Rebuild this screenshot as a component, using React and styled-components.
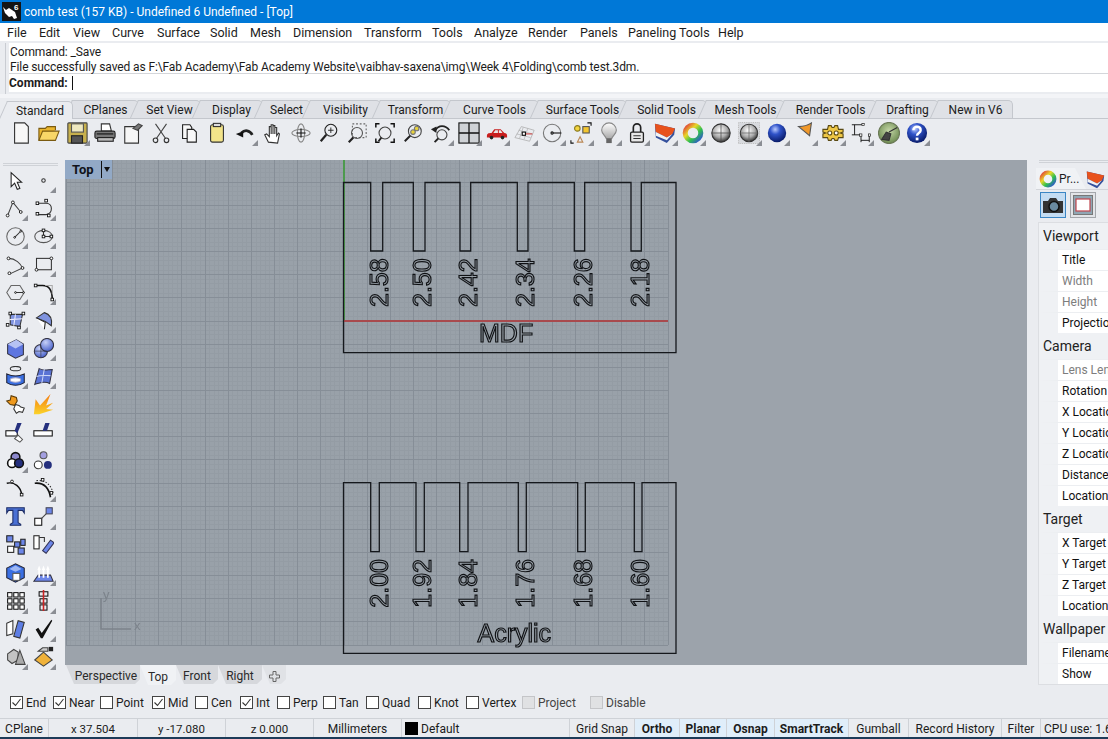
import React from 'react';
import styled, { createGlobalStyle } from 'styled-components';

const GlobalStyle = createGlobalStyle`
  html, body { margin: 0; padding: 0; overflow: hidden; background: #eaecf0; }
  * { box-sizing: border-box; }
`;

const Window = styled.div`
  width: 1108px;
  height: 739px;
  display: flex;
  flex-direction: column;
  overflow: hidden;
  background: #eaecf0;
  color: #1c1c1c;
  font-family: Roboto, "Liberation Sans", sans-serif;
  font-size: 12px;
`;

const TitleBar = styled.div`
  height: 23px;
  flex: none;
  display: flex;
  align-items: center;
  gap: 3px;
  padding-left: 2px;
  background: #0078d7;
  color: #fff;
  white-space: nowrap;
`;

const MenuBar = styled.div`
  height: 18px;
  flex: none;
  display: flex;
  align-items: center;
  padding-left: 7px;
  background: #fff;
  font-size: 12.5px;
  white-space: nowrap;
`;

const MenuItem = styled.span`
  width: ${p => p.$w}px;
  flex: none;
`;

const CommandArea = styled.div`
  height: 51px;
  flex: none;
  margin: 2px 0 0 5px;
  padding-left: 3px;
  border-left: 1px solid #c9ccd2;
  display: flex;
  flex-direction: column;
`;

const History = styled.div`
  height: 31px;
  padding: 2px 0 0 1px;
  background: #fff;
  line-height: 15px;
  letter-spacing: -0.11px;
  border-bottom: 1px solid #d4d6da;
  white-space: nowrap;
`;

const Prompt = styled.div`
  height: 18px;
  display: flex;
  align-items: center;
  background: #fff;
  font-weight: 700;
`;

const Caret = styled.span`
  width: 1px;
  height: 14px;
  margin-left: 4px;
  background: #111;
`;

const TabStrip = styled.div`
  height: 25px;
  flex: none;
  display: flex;
  align-items: flex-end;
  position: relative;
  isolation: isolate;
  padding-left: 8px;
  border-top: 4px solid #f3f4f7;
  border-bottom: 1px solid #c4c7cd;
`;

const Tab = styled.div`
  position: relative;
  height: 18px;
  width: ${p => p.$w}px;
  flex: none;
  margin-bottom: ${p => (p.$active ? '-1px' : '0')};
  display: flex;
  align-items: center;
  justify-content: center;
  background: ${p => (p.$active ? '#eaecf0' : '#dfe1e6')};
  border-top: 1px solid #c4c7cd;
  border-right: 1px solid #c4c7cd;
  border-top-right-radius: 5px;
  z-index: ${p => (p.$active ? 2 : 1)};
  white-space: nowrap;
  &::before {
    content: '';
    position: absolute;
    left: -5px;
    top: -1px;
    bottom: 0;
    width: 12px;
    background: inherit;
    border-top: 1px solid #c4c7cd;
    border-left: 1px solid #c4c7cd;
    transform: skewX(-24deg);
    z-index: -1;
  }
`;

const Toolbar = styled.div`
  height: 28px;
  flex: none;
  display: flex;
  align-items: center;
  padding-left: 7px;
`;

const ToolBtn = styled.div`
  position: relative;
  width: 28px;
  height: 28px;
  flex: none;
  display: flex;
  align-items: center;
  justify-content: center;
  &::after {
    content: '';
    display: ${p => (p.$more ? 'block' : 'none')};
    position: absolute;
    right: 1px;
    bottom: 1px;
    border-style: solid;
    border-width: 0 0 6px 6px;
    border-color: transparent transparent #8b8e94 transparent;
  }
`;

const Main = styled.div`
  margin-top: 13px;
  height: 531px;
  flex: none;
  display: flex;
`;

const SideBar = styled.div`
  width: 65px;
  flex: none;
  padding: 3px 0 0 1px;
  display: flex;
  flex-direction: column;
`;

const Grip = styled.div`
  height: 3px;
  margin: 0 ${p => p.$right || 0}px 0 ${p => p.$left || 0}px;
  flex: none;
  border-top: 1px solid #cfd2d7;
  border-bottom: 1px solid #cfd2d7;
`;

const SideGrid = styled.div`
  display: grid;
  grid-template-columns: repeat(2, 28px);
  grid-auto-rows: 28.06px;
`;

const ViewColumn = styled.div`
  width: 962px;
  flex: none;
  display: flex;
  flex-direction: column;
`;

const Viewport = styled.div`
  position: relative;
  height: 505px;
  flex: none;
  background: #9ca3ab;
  overflow: hidden;
`;

const ViewportLabel = styled.div`
  position: absolute;
  left: 0;
  top: 0;
  width: 47px;
  height: 19px;
  display: flex;
  align-items: center;
  padding-left: 7px;
  background: #92a9c6;
  font-weight: 700;
  font-size: 13px;
  color: #10131a;
`;

const LabelArrow = styled.span`
  margin-left: auto;
  height: 17px;
  width: 11px;
  border-left: 1px solid #111;
  position: relative;
  &::after {
    content: '';
    position: absolute;
    left: 2px;
    top: 6px;
    border-style: solid;
    border-width: 5px 3.5px 0 3.5px;
    border-color: #111 transparent transparent transparent;
  }
`;

const ViewTabs = styled.div`
  height: 20px;
  flex: none;
  display: flex;
  padding-left: 1px;
`;

const ViewTab = styled.div`
  width: ${p => p.$w}px;
  height: ${p => (p.$active ? 20 : 19)}px;
  flex: none;
  display: flex;
  align-items: center;
  justify-content: center;
  padding: 3px 0 0 ${p => p.$pad || 0}px;
  background: ${p => (p.$active ? '#f0f2f5' : '#d6d8dc')};
  clip-path: polygon(0 0, 100% 0, 100% 75%, calc(100% - 5px) 100%, 8px 100%);
  color: #2a2a2a;
`;

const PlusTab = styled(ViewTab)`
  background: #e0e2e6;
`;

const Panel = styled.div`
  width: 72px;
  margin-left: 9px;
  flex: none;
  display: flex;
  flex-direction: column;
  overflow: hidden;
`;

const PanelTabs = styled.div`
  height: 22px;
  margin-top: 5px;
  flex: none;
  display: flex;
  align-items: flex-end;
  border-bottom: 1px solid #d3d5da;
`;

const PanelTab = styled.div`
  width: 50px;
  height: 21px;
  flex: none;
  display: flex;
  align-items: center;
  gap: 2px;
  padding-left: 3px;
  background: #f0f2f5;
  clip-path: polygon(0 0, 78% 0, 100% 100%, 0 100%);
  white-space: nowrap;
`;

const PanelButtons = styled.div`
  height: 28px;
  margin-top: 1px;
  margin-left: 4px;
  flex: none;
  display: flex;
  align-items: center;
  gap: 4px;
`;

const ViewBtn = styled.div`
  width: 26px;
  height: 26px;
  flex: none;
  display: flex;
  align-items: center;
  justify-content: center;
  background: ${p => (p.$selected ? '#c4dcf2' : '#e2e4e8')};
  border: 1px solid ${p => (p.$selected ? '#3c86c4' : '#a4a7ac')};
`;

const PropTable = styled.div`
  margin: 3px 0 0 2px;
  width: 72px;
  background: #fff;
  border: 1px solid #dcdee2;
  border-right: 0;
  white-space: nowrap;
`;

const SectionHead = styled.div`
  height: 26px;
  padding-left: 4px;
  display: flex;
  align-items: center;
  background: #eff1f4;
  font-size: 14px;
  color: #222;
`;

const PropRow = styled.div`
  height: 21px;
  display: flex;
  align-items: center;
  border-top: 1px solid #eceef1;
  border-left: 19px solid #eff1f4;
  padding-left: 4px;
  color: ${p => (p.$muted ? '#7d7d7d' : '#111')};
`;

const OsnapBar = styled.div`
  height: 27px;
  flex: none;
  display: flex;
  align-items: center;
  padding: 0 0 4px 10px;
  white-space: nowrap;
`;

const Snap = styled.label`
  width: ${p => p.$w}px;
  flex: none;
  display: flex;
  align-items: center;
  gap: 3px;
  color: ${p => (p.$off ? '#444' : '#1c1c1c')};
`;

const Box = styled.span`
  width: 13px;
  height: 13px;
  flex: none;
  display: flex;
  background: ${p => (p.$off ? '#e0e1e3' : '#fff')};
  border: 1px solid ${p => (p.$off ? '#c4c5c8' : '#444')};
`;

const StatusBar = styled.div`
  height: 21px;
  flex: none;
  display: flex;
  border-top: 1px solid #cfd2d7;
  border-bottom: 2px solid #1d3b58;
  white-space: nowrap;
`;

const Cell = styled.div`
  width: ${p => p.$w}px;
  flex: none;
  display: flex;
  align-items: center;
  justify-content: ${p => (p.$left ? 'flex-start' : 'center')};
  padding-left: ${p => (p.$left ? 3 : 0)}px;
  padding-top: 1px;
  gap: 3px;
  border-right: 1px solid #cfd2d7;
  background: ${p => (p.$on ? '#e0eefa' : 'transparent')};
  font-weight: ${p => (p.$on ? 700 : 400)};
  font-size: ${p => (p.$num ? 11.5 : 12)}px;
  overflow: hidden;
`;

const Swatch = styled.span`
  width: 13px;
  height: 13px;
  background: #000;
  flex: none;
`;

const Canvas = styled.svg`
  display: block;
  position: absolute;
  inset: 0;
  will-change: transform;
`;

const Defs = styled.svg`
  position: absolute;
  width: 0;
  height: 0;
`;

const S = ({ size = 24, children }) => (
  <svg width={size} height={size} viewBox="0 0 24 24" fill="none" stroke="#222" strokeWidth="1.2">{children}</svg>
);

const h = (x, y, s = 3) => <rect x={x - s / 2} y={y - s / 2} width={s} height={s} fill="#fff" stroke="#111" strokeWidth="1" />;
const c = (x, y, r = 1.6) => <circle cx={x} cy={y} r={r} fill="#fff" stroke="#111" strokeWidth="1" />;

const ICONS = {
  new: <path d="M5 1h11l4 4v18H5z" fill="#f7f7f7" stroke="#333" />,
  open: <><path d="M1 20V7h7l2-2h9v4" fill="#e9b52e" stroke="#7a5a10" /><path d="M1 20l4-10h18l-4 10z" fill="#f8d667" stroke="#7a5a10" /></>,
  save: <><rect x="2" y="1" width="21" height="22" rx="1" fill="#c7b04d" stroke="#444" /><rect x="6" y="2" width="13" height="9" fill="#efe9c0" stroke="#555" /><rect x="6" y="15" width="12" height="8" fill="#555" /></>,
  print: <><path d="M8 2h9l2 8H8z" fill="#fff" stroke="#333" /><rect x="1" y="10" width="22" height="8" rx="2" fill="#777" stroke="#222" /><rect x="4" y="17" width="17" height="4" fill="#bbb" stroke="#222" /><path d="M3 13h18" stroke="#111" /></>,
  props: <><path d="M3 5h15v18H3z" fill="#f6f6f6" stroke="#333" /><path d="M12 7l6-5 4 2-5 5z" fill="#777" stroke="#444" /></>,
  cut: <><path d="M6 2l11 16M18 2L7 18" stroke="#444" /><circle cx="6" cy="20" r="2.5" stroke="#333" /><circle cx="18" cy="20" r="2.5" stroke="#333" /></>,
  copy: <><path d="M5 3h8l2 3v12H5z" fill="#f8f8f8" stroke="#222" /><path d="M10 8h7l3 3v11H10z" fill="#f8f8f8" stroke="#222" /></>,
  paste: <><rect x="5" y="3" width="14" height="19" rx="2" fill="#f3e48a" stroke="#333" /><rect x="8" y="1.5" width="8" height="3.5" fill="#ddd" stroke="#333" /></>,
  undo: <><path d="M8 12c4-4 9-3 12 2" stroke="#222" strokeWidth="3" /><path d="M2 13l8-3v7z" fill="#111" stroke="none" /></>,
  hand: <path d="M7 22l-4-8 2-1 3 3V5h2v8-10h2v10-9h2v9-7h2v9l2-3 1 1-2 10z" fill="#fff" stroke="#333" />,
  rotate: <><ellipse cx="12" cy="12" rx="10" ry="4" stroke="#888" /><ellipse cx="12" cy="12" rx="4" ry="10" stroke="#888" /><path d="M12 7v10M7 12h10" stroke="#111" /></>,
  zoom: <><circle cx="14" cy="9" r="6.5" stroke="#222" /><path d="M9 14l-6 7" strokeWidth="2.4" /><path d="M14 6v6M11 9h6" strokeWidth="1" /></>,
  zoomWin: <><rect x="7" y="2" width="15" height="15" strokeDasharray="2 2" stroke="#666" /><circle cx="12" cy="12" r="6" stroke="#555" /><path d="M8 17l-5 5" strokeWidth="2.4" /></>,
  zoomExt: <><circle cx="12" cy="12" r="6.5" stroke="#444" /><path d="M8 17l-3 4" strokeWidth="2" /><path d="M2 6V2h4M18 2h4v4M2 18v4h4M18 22h4v-4" stroke="#111" strokeWidth="1.6" /></>,
  zoomSel: <><circle cx="14" cy="10" r="7" stroke="#444" /><circle cx="12" cy="11" r="2.5" fill="#e8d23a" stroke="#777" /><circle cx="16" cy="7" r="2.5" fill="#e8d23a" stroke="#777" /><path d="M9 15l-6 6" strokeWidth="2.2" /></>,
  zoomPrev: <><path d="M6 9c3-6 11-6 15 0" stroke="#222" strokeWidth="2" /><path d="M1 8l6-3v7z" fill="#222" stroke="none" /><circle cx="13" cy="14" r="5.5" stroke="#444" /><path d="M9 18l-4 4" strokeWidth="2" /></>,
  four: <><rect x="1" y="1" width="22" height="22" fill="#cfd2d6" stroke="#111" /><path d="M12 1v22M1 12h22" stroke="#111" strokeWidth="1.4" /></>,
  car: <><path d="M1 15c0-3 3-3 5-3l3-4h7l4 4c2 0 3 1 3 3v2H1z" fill="#c81e1e" stroke="none" /><path d="M10 9h3v3H8zM14 9h2l2 3h-4z" fill="#e8e8e8" stroke="none" /><circle cx="6" cy="17" r="2" fill="#222" stroke="none" /><circle cx="18" cy="17" r="2" fill="#222" stroke="none" /></>,
  cplane: <><path d="M8 5l14 4-5 12L1 17z" stroke="#aaa" strokeWidth="0.8" /><path d="M5 9l15 4M3 13l15 4M10 6l-4 12M15 7l-4 12" stroke="#aaa" strokeWidth="0.7" /><path d="M12 13h8" stroke="#c44" /><rect x="9" y="11" width="3.5" height="3.5" fill="#fff" stroke="#111" /></>,
  cpoint: <><circle cx="11" cy="12" r="9.5" stroke="#777" /><circle cx="11" cy="12" r="1.2" stroke="#111" /><path d="M12 12h9" stroke="#111" /></>,
  snap: <><circle cx="8" cy="7" r="3" fill="#f3d53f" stroke="#8a7a20" /><rect x="14" y="5" width="7" height="7" fill="#f3c52f" stroke="#555" /><path d="M11 16l3 6H8z" stroke="#b85" /><path d="M19 1h4v3M1 20v3h3" stroke="#111" /></>,
  bulb: <><path d="M12 1a8 8 0 00-8 8c0 4 4 6 5 9h6c1-3 5-5 5-9a8 8 0 00-8-8z" fill="url(#bulbG)" stroke="#888" /><rect x="9" y="18" width="6" height="5" fill="#666" stroke="none" /></>,
  lock: <><path d="M8 11V6a4 4 0 018 0v5" stroke="#222" strokeWidth="1.8" /><rect x="5" y="11" width="14" height="11" rx="1.5" fill="#e7e7e7" stroke="#222" strokeWidth="1.4" /><path d="M8 15h8M8 18h8" stroke="#333" /></>,
  layers: <><path d="M1 2l22 5-1 7-8 9-12-6z" fill="#34509c" stroke="none" /><path d="M1 2l22 5-3 6-6 4-12-6z" fill="#e8521c" stroke="none" /><path d="M2 11l12 6 6-4-6 7-12-5z" fill="#f2f2f2" stroke="none" /></>,
  wheel: <circle cx="12" cy="12" r="8.5" stroke="url(#rainbow)" strokeWidth="5.5" />,
  ball: <><circle cx="12" cy="12" r="10" fill="url(#greyBall)" stroke="#333" /><path d="M2 12h20M12 2v20" stroke="#444" strokeWidth="0.8" /></>,
  ball2: <><rect x="0.5" y="0.5" width="23" height="23" fill="#d8dade" stroke="#bbb" strokeDasharray="1 1" /><circle cx="12" cy="12" r="9.5" fill="url(#greyBall)" stroke="#333" /><path d="M2.5 12h19M12 2.5v19" stroke="#666" strokeWidth="0.8" /></>,
  blueBall: <circle cx="12" cy="12" r="10" fill="url(#blueBall)" stroke="none" />,
  cone: <path d="M5 5c5 0 11-2 14-4l-2 14z" fill="#f0982a" stroke="#555" />,
  gear: <><path d="M1 8h5l1-4h3l1 2h2l1-2h3l1 4h5v3l-3 1 3 1v4h-5l-1 3h-3l-1-2h-2l-1 2H7l-1-3H1v-4l3-1-3-1z" fill="#eec746" stroke="#5a4a14" /><circle cx="8.5" cy="12" r="2.2" fill="#fff" stroke="#5a4a14" /><circle cx="15.5" cy="12" r="2.2" fill="#fff" stroke="#5a4a14" /></>,
  dims: <><path d="M2 3h12M5 3v11M2 14h9M12 14v8M12 20h9M21 14v8" stroke="#111" strokeWidth="1" /><rect x="13" y="1.5" width="2.5" height="2.5" fill="#fff" stroke="#111" strokeWidth="0.7" /><rect x="10.5" y="13" width="2.5" height="2.5" fill="#fff" stroke="#111" strokeWidth="0.7" /><rect x="20" y="13" width="2.5" height="2.5" fill="#fff" stroke="#111" strokeWidth="0.7" /></>,
  globe: <><circle cx="12" cy="12" r="11.5" fill="url(#greenBall)" stroke="#6c7a58" /><path d="M4 19l5-8 5 2-2 7zM12 11l9-5" stroke="#333" fill="#444" /></>,
  help: <><circle cx="12" cy="12" r="11" fill="url(#blueBall)" stroke="none" /><path d="M8 9c0-5 8-5 8 0 0 3-4 3-4 6" stroke="#fff" strokeWidth="2.6" /><rect x="10.6" y="17" width="3" height="3" fill="#fff" stroke="none" /></>,
  pointer: <path d="M7 3v16l4-4 3 7 3-1-3-7h5z" fill="#fff" stroke="#222" />,
  point: <circle cx="12" cy="12" r="2" stroke="#333" />,
  polyline: <><path d="M3 20L9 5l9 11" stroke="#444" />{c(3, 20)}{c(9, 5)}{c(18, 16)}</>,
  curve: <><path d="M5 6h10c8 0 8 12 0 13H5" stroke="#333" />{h(5, 6)}{h(15, 3)}{h(5, 18)}{h(18, 20)}</>,
  circle: <><circle cx="12" cy="12" r="10" stroke="#666" /><path d="M11 13l7-7" stroke="#333" />{c(11, 13, 1)}{c(18, 6, 1)}</>,
  ellipse: <><ellipse cx="12" cy="12" rx="10" ry="7" stroke="#555" /><path d="M12 12h9M12 5v7" stroke="#333" />{h(12, 12)}{h(12, 5)}{h(21, 12)}</>,
  arc: <><path d="M4 5c8 0 14 6 16 11l-15 7" stroke="#444" />{c(4, 5)}{c(20, 16)}{c(5, 22)}</>,
  rect: <><rect x="4" y="5" width="17" height="13" stroke="#333" />{c(21, 5)}{c(4, 18)}</>,
  polygon: <><path d="M7 4h10l5 8-5 8H7l-5-8z" stroke="#666" /><path d="M12 12h9" stroke="#333" />{c(12, 12, 1)}{c(21, 12, 1)}</>,
  fillet: <><path d="M3 4h8c7 0 11 4 11 16" stroke="#111" strokeWidth="1.8" /><path d="M14 4h8v10" stroke="#aaa" />{h(3, 4)}{h(22, 20)}</>,
  surfPts: <><path d="M6 5h14l-3 14-11-2z" fill="#7f93df" stroke="#333" /><path d="M12 5l-2 13M5 11l15-1" stroke="#eef" />{h(6, 4)}{h(21, 4)}{h(3, 17)}{h(16, 20)}</>,
  edgeSurf: <><path d="M4 9L13 3c7 2 9 8 8 15l-7-5z" fill="#7f93df" stroke="#333" /><path d="M4 9l10 5 -1 8" fill="#fff" stroke="#222" /></>,
  box: <><path d="M3 7l10-5 8 5v12l-9 4-9-5z" fill="#5e76e0" stroke="#334" /><path d="M3 7l9 5 9-5-8-5z" fill="#b6c2f4" stroke="none" /></>,
  spheres: <><circle cx="9" cy="15" r="7.5" fill="url(#purpleBall)" stroke="#334" /><circle cx="16" cy="8" r="7.5" fill="url(#purpleBall)" stroke="#334" /><path d="M2 15h14M9 8v14" stroke="#334" strokeWidth="0.7" /></>,
  cylinder: <><ellipse cx="12" cy="3" rx="6" ry="2.5" stroke="#333" /><path d="M2 9c6 3 14 3 20 0v10c-6 4-14 4-20 0z" fill="#3a6fe2" stroke="#223" /><ellipse cx="12" cy="16" rx="6" ry="2.5" fill="#fff" stroke="#aac" /></>,
  surfBlue: <><path d="M7 3c5 3 10 1 15 1l-3 16c-5-3-10-1-17 1z" fill="#5a73d5" stroke="#334" /><path d="M4 12c5-2 11-1 16-1M13 3l-3 17" stroke="#cbd5f6" /></>,
  puzzle: <><path d="M2 8l4-1 1-5 6 2 1 4-3 5-5-1z" fill="#f09a1e" stroke="#5a3a05" /><path d="M12 12l4 1 2 2 4 1-2 5-4-1-3 2-3-5z" fill="#fff" stroke="#333" /></>,
  burst: <path d="M1 23L3 6l5 7L20 0l-5 13 8-3-8 7 8 1-16 5z" fill="url(#burstG)" stroke="none" />,
  trim: <><rect x="1" y="10" width="13" height="6" fill="#fff" stroke="#111" /><path d="M11 10l3-9h5l-5 12z" fill="#25307e" stroke="none" /><path d="M11 19l4-4 5 5-3 3z" fill="#fff" stroke="#555" /></>,
  split: <><rect x="1" y="10" width="21" height="6" fill="#fff" stroke="#111" /><path d="M11 10l3-9h5l-3 9z" fill="#25307e" stroke="none" /></>,
  boolean: <><circle cx="12" cy="8" r="5" fill="#8c88cc" stroke="#111" strokeWidth="1.8" /><circle cx="8" cy="15" r="5" fill="#fff" stroke="#111" strokeWidth="1.8" /><circle cx="16" cy="15" r="5" fill="#25307e" stroke="#111" strokeWidth="1.8" /></>,
  circles: <><circle cx="12" cy="6" r="4" fill="#a39fe0" stroke="#555" /><circle cx="6" cy="17" r="4.5" fill="#fff" stroke="#333" /><circle cx="17" cy="17" r="4.5" fill="#25307e" stroke="none" /></>,
  arcPt: <><path d="M2 6c9-2 16 4 17 13" stroke="#111" strokeWidth="1.6" />{c(8, 4)}{h(19, 19)}</>,
  offset: <><path d="M2 6c10-1 16 5 18 16" stroke="#111" strokeWidth="1.8" /><path d="M4 3c10-1 16 4 19 14" stroke="#222" strokeDasharray="1.5 2" />{h(11, 2)}{h(21, 17)}</>,
  text: <path d="M2 2h20v6l-2-3h-5v14l3 2v1H6v-1l3-2V5H4L2 8z" fill="#4a70d4" stroke="#1c2c66" />,
  scale: <><rect x="2" y="14" width="8" height="8" stroke="#111" fill="#fff" /><rect x="15" y="2" width="7" height="7" fill="#6c86e8" stroke="#445" /><path d="M9 15l6-6" stroke="#444" /></>,
  array: <><rect x="2" y="2" width="7" height="7" fill="#6c86e8" stroke="#222" /><rect x="11" y="9" width="6" height="6" fill="#6c86e8" stroke="#222" /><rect x="18" y="6" width="5" height="7" fill="#6c86e8" stroke="#222" /><rect x="3" y="14" width="7" height="7" fill="#fff" stroke="#222" /><rect x="15" y="16" width="7" height="7" fill="#6c86e8" stroke="#222" /></>,
  orient: <><rect x="1" y="2" width="6" height="15" fill="#fff" stroke="#222" /><path d="M15 22l-4-3 9-12 4 3z" fill="#6c86e8" stroke="#335" /><path d="M7 4h6v5" stroke="#333" /></>,
  solid: <><path d="M2 7l10-5 10 5v11l-10 5-10-5z" fill="#3a6fe2" stroke="#223" /><path d="M5 8l7-4 7 4-7 3z" fill="#9db7f4" stroke="none" /><rect x="9" y="13" width="8" height="8" fill="#fff" stroke="#555" /></>,
  extrude: <><path d="M1 22l5-7h14l3 7z" fill="#6c86e8" stroke="#334" /><path d="M7 18V8M12 18V8M17 18V8" stroke="#fff" strokeWidth="2" /><path d="M5 9l2-5 2 5zM10 9l2-5 2 5zM15 9l2-5 2 5z" fill="#fff" stroke="none" /></>,
  grid: <>{[3, 10, 17].flatMap(y => [3, 10, 17].map(x => <rect key={`${x}${y}`} x={x} y={y} width="5" height="5" stroke="#111" fill="#fff" />))}</>,
  mirror: <><rect x="7" y="2" width="10" height="5" stroke="#111" /><rect x="8" y="10" width="8" height="5" stroke="#111" /><rect x="8" y="17" width="8" height="6" stroke="#111" /><path d="M12 0v24" stroke="#c22" strokeWidth="1.8" /></>,
  panels: <><path d="M2 6l7-3v15l-7 2z" fill="#fff" stroke="#333" /><path d="M10 21l5-18 7 2-5 18z" fill="#5e7ee4" stroke="#333" /></>,
  check: <path d="M3 13l3-2 4 6L21 2l1 1-11 20h-2z" fill="#111" stroke="none" />,
  shapes: <><path d="M3 9l7-5 5 3v9l-7 4-5-4z" fill="#c3c3c3" stroke="#444" /><path d="M17 5l6 16H12z" fill="#aaa" stroke="#444" /></>,
  pyramid: <><path d="M2 16L12 7l10 9-10 7z" fill="#f0b23a" stroke="#444" /><path d="M6 6l5-4h6v4h-6z" fill="#ccc" stroke="#444" /><rect x="18" y="1" width="5" height="5" fill="#222" stroke="none" /></>,
};

const Icon = ({ name, size }) => <S size={size}>{ICONS[name]}</S>;

const MENU = [['File', 32], ['Edit', 34], ['View', 39], ['Curve', 45], ['Surface', 53], ['Solid', 40], ['Mesh', 43], ['Dimension', 71], ['Transform', 68], ['Tools', 42], ['Analyze', 54], ['Render', 52], ['Panels', 48], ['Paneling Tools', 90], ['Help', 40]];

const TABS = [['Standard', 65], ['CPlanes', 66], ['Set View', 62], ['Display', 62], ['Select', 48], ['Visibility', 70], ['Transform', 70], ['Curve Tools', 88], ['Surface Tools', 88], ['Solid Tools', 80], ['Mesh Tools', 78], ['Render Tools', 92], ['Drafting', 62], ['New in V6', 74]];

const TOOLS = [['new'], ['open'], ['save', 1], ['print'], ['props'], ['cut'], ['copy'], ['paste'], ['undo', 1], ['hand'], ['rotate'], ['zoom'], ['zoomWin'], ['zoomExt'], ['zoomSel'], ['zoomPrev', 1], ['four', 1], ['car', 1], ['cplane', 1], ['cpoint', 1], ['snap', 1], ['bulb', 1], ['lock', 1], ['layers', 1], ['wheel', 1], ['ball'], ['ball2', 1], ['blueBall', 1], ['cone', 1], ['gear', 1], ['dims', 1], ['globe'], ['help', 1]];

const SIDE = [['pointer'], ['point', 1], ['polyline', 1], ['curve', 1], ['circle', 1], ['ellipse', 1], ['arc', 1], ['rect', 1], ['polygon', 1], ['fillet', 1], ['surfPts', 1], ['edgeSurf', 1], ['box', 1], ['spheres', 1], ['cylinder', 1], ['surfBlue', 1], ['puzzle'], ['burst'], ['trim'], ['split'], ['boolean', 1], ['circles', 0], ['arcPt'], ['offset', 1], ['text'], ['scale', 1], ['array'], ['orient'], ['solid', 1], ['extrude', 1], ['grid', 1], ['mirror', 1], ['panels', 1], ['check', 1], ['shapes', 1], ['pyramid', 1]];

const SNAPS = [['End', 43, 1], ['Near', 47, 1], ['Point', 52, 0], ['Mid', 43, 1], ['Cen', 45, 0], ['Int', 37, 1], ['Perp', 46, 0], ['Tan', 43, 0], ['Quad', 52, 0], ['Knot', 48, 0], ['Vertex', 56, 0], ['Project', 68, 0, 1], ['Disable', 80, 0, 1]];

const PROPS = [
  ['Viewport', [['Title'], ['Width', 1], ['Height', 1], ['Projection']]],
  ['Camera', [['Lens Length', 1], ['Rotation'], ['X Location'], ['Y Location'], ['Z Location'], ['Distance'], ['Location']]],
  ['Target', [['X Target'], ['Y Target'], ['Z Target'], ['Location']]],
  ['Wallpaper', [['Filename'], ['Show']]],
];

const STATUS = [
  { t: 'CPlane', w: 49 }, { t: 'x 37.504', w: 89, num: true }, { t: 'y -17.080', w: 88, num: true }, { t: 'z 0.000', w: 88, num: true }, { t: 'Millimeters', w: 88 },
  { t: 'Default', w: 168, swatch: true }, { t: 'Grid Snap', w: 65 }, { t: 'Ortho', w: 45, on: true }, { t: 'Planar', w: 47, on: true }, { t: 'Osnap', w: 48, on: true },
  { t: 'SmartTrack', w: 74, on: true }, { t: 'Gumball', w: 60 }, { t: 'Record History', w: 93 }, { t: 'Filter', w: 39 }, { t: 'CPU use: 1.6 %', w: 90, left: true },
];

// drawing coords are viewport-relative: viewport starts at (65,160)
const OX = 344 - 65;
const OY = 321 - 160;
const STEP = 23.15;

const range = (a, b) => Array.from({ length: b - a + 1 }, (_, i) => a + i);

const Grid = () => {
  const left = OX - 12 * STEP;
  const right = OX + 14 * STEP;
  const top = OY - 7 * STEP;
  const bottom = OY + 14 * STEP;
  return (
    <g shapeRendering="crispEdges">
      <rect x={left} y={top} width={right - left} height={bottom - top} fill="#99a1a9" />
      {range(-60, 70).map(i => (i % 5 ? <line key={`mv${i}`} x1={OX + (i * STEP) / 5} x2={OX + (i * STEP) / 5} y1={top} y2={bottom} stroke="#949ca4" /> : null))}
      {range(-35, 70).map(i => (i % 5 ? <line key={`mh${i}`} y1={OY + (i * STEP) / 5} y2={OY + (i * STEP) / 5} x1={left} x2={right} stroke="#949ca4" /> : null))}
      {range(-12, 14).map(i => <line key={`v${i}`} x1={OX + i * STEP} x2={OX + i * STEP} y1={top} y2={bottom} stroke="#868e97" />)}
      {range(-7, 14).map(i => <line key={`h${i}`} y1={OY + i * STEP} y2={OY + i * STEP} x1={left} x2={right} stroke="#868e97" />)}
      <line x1={OX} x2={OX} y1={0} y2={OY} stroke="#4d9a4d" strokeWidth="1.4" />
      <line x1={OX} x2={right} y1={OY} y2={OY} stroke="#a84a4e" strokeWidth="1.6" />
    </g>
  );
};

const combPath = (top, bottom, slotBottom, slots) => {
  const L = 343.5 - 65;
  const R = 676 - 65;
  let d = `M${L} ${top}`;
  slots.forEach(([a, b]) => {
    d += `H${a - 65}V${slotBottom}H${b - 65}V${top}`;
  });
  return `${d}H${R}V${bottom}H${L}Z`;
};

const MDF_SLOTS = [[370.7, 382.7], [413.3, 425], [460, 470.7], [517.3, 528], [574.3, 584.7], [631, 641.3]];
const ACR_SLOTS = [[370.7, 379.3], [416, 424.3], [459.7, 468], [518.3, 526.3], [577.7, 585.3], [634.3, 642]];
const LABEL_X = [388, 431, 477, 534, 592, 649];

const Outline = ({ children, ...rest }) => (
  <text fontFamily="'Liberation Sans', sans-serif" fontSize="25" fill="none" stroke="#0f1114" strokeWidth="1.15" {...rest}>{children}</text>
);

const Drawing = () => (
  <Canvas width="962" height="505" viewBox="0 0 962 505">
    <Grid />
    <g fill="none" stroke="#15181c" strokeWidth="1.3">
      <path d={combPath(22.5, 192.7, 91, MDF_SLOTS)} />
      <path d={combPath(322.7, 493.3, 391.7, ACR_SLOTS)} />
    </g>
    {['2.58', '2.50', '2.42', '2.34', '2.26', '2.18'].map((t, i) => (
      <Outline key={t} transform={`translate(${LABEL_X[i] - 65} 147) rotate(-90)`}>{t}</Outline>
    ))}
    {['2.00', '1.92', '1.84', '1.76', '1.68', '1.60'].map((t, i) => (
      <Outline key={t} transform={`translate(${LABEL_X[i] - 65} 447.7) rotate(-90)`}>{t}</Outline>
    ))}
    <Outline x="414" y="181.7">MDF</Outline>
    <Outline x="412.5" y="481.7">Acrylic</Outline>
    <g stroke="#7c838b" strokeWidth="1.6" fill="none">
      <path d="M36 438V469H66" />
    </g>
    <text x="38" y="439" fill="#7c838b" fontFamily="'Liberation Sans', sans-serif" fontSize="13">y</text>
    <text x="69" y="470" fill="#7c838b" fontFamily="'Liberation Sans', sans-serif" fontSize="13">x</text>
  </Canvas>
);

const SharedDefs = () => (
  <Defs>
    <defs>
      <radialGradient id="greyBall" cx="45%" cy="35%" r="65%"><stop offset="0" stopColor="#fff" /><stop offset="0.6" stopColor="#aaa" /><stop offset="1" stopColor="#333" /></radialGradient>
      <radialGradient id="blueBall" cx="40%" cy="30%" r="70%"><stop offset="0" stopColor="#b8c9ff" /><stop offset="0.4" stopColor="#2f52c8" /><stop offset="1" stopColor="#0a1c6a" /></radialGradient>
      <radialGradient id="purpleBall" cx="40%" cy="30%" r="70%"><stop offset="0" stopColor="#c6d0f6" /><stop offset="1" stopColor="#4c64cc" /></radialGradient>
      <radialGradient id="greenBall" cx="50%" cy="40%" r="60%"><stop offset="0" stopColor="#c6d8a8" /><stop offset="1" stopColor="#6c8a50" /></radialGradient>
      <linearGradient id="bulbG" x1="0" x2="0" y1="0" y2="1"><stop offset="0" stopColor="#fff" /><stop offset="1" stopColor="#aaa" /></linearGradient>
      <linearGradient id="burstG" x1="0" x2="0" y1="0" y2="1"><stop offset="0" stopColor="#f47a10" /><stop offset="1" stopColor="#fbd32a" /></linearGradient>
      <linearGradient id="rainbow" x1="0" x2="1" y1="0" y2="1"><stop offset="0" stopColor="#e03a3a" /><stop offset="0.35" stopColor="#e8d828" /><stop offset="0.65" stopColor="#2fbf4f" /><stop offset="1" stopColor="#2f4fd8" /></linearGradient>
    </defs>
  </Defs>
);

const RhinoLogo = () => (
  <svg width="19" height="19" viewBox="0 0 19 19">
    <rect width="19" height="19" fill="#141414" />
    <path d="M1 5l3 3 3-2 6 4 2 6-3 1-2-3-3 1-4-4z" fill="#fff" />
    <text x="12" y="8" fill="#fff" fontFamily="'Liberation Sans', sans-serif" fontSize="8" fontWeight="700">6</text>
  </svg>
);

const Tick = () => (
  <svg width="11" height="11" viewBox="0 0 11 11" fill="none" stroke="#333" strokeWidth="1.1"><path d="M1.5 5.5l3 3 5-6.5" /></svg>
);

const Camera = () => (
  <svg width="22" height="20" viewBox="0 0 22 20">
    <path d="M1 6h5l2-3h6l2 3h5v12H1z" fill="#333" />
    <circle cx="12" cy="11.5" r="5" fill="#6a8aa0" stroke="#111" strokeWidth="1.5" />
  </svg>
);

const WallpaperIcon = () => (
  <svg width="20" height="20" viewBox="0 0 20 20">
    <rect x="0.5" y="0.5" width="19" height="19" fill="#8fa6b4" stroke="#777" />
    <rect x="3" y="4" width="14" height="12" fill="#fff" stroke="#c2454d" strokeWidth="1.2" />
  </svg>
);

const PlusIcon = () => (
  <svg width="11" height="11" viewBox="0 0 11 11" fill="none" stroke="#666"><path d="M4 .5h3v3.5h3.5v3H7v3.5H4V7H.5V4H4z" /></svg>
);

const App = () => (
  <Window>
    <GlobalStyle />
    <SharedDefs />
    <TitleBar>
      <RhinoLogo />
      <span>comb test (157 KB) - Undefined 6 Undefined - [Top]</span>
    </TitleBar>
    <MenuBar>
      {MENU.map(([t, w]) => <MenuItem key={t} $w={w}>{t}</MenuItem>)}
    </MenuBar>
    <CommandArea>
      <History>
        Command: _Save<br />
        File successfully saved as F:\Fab Academy\Fab Academy Website\vaibhav-saxena\img\Week 4\Folding\comb test.3dm.
      </History>
      <Prompt>Command:<Caret /></Prompt>
    </CommandArea>
    <TabStrip>
      {TABS.map(([t, w], i) => <Tab key={t} $w={w} $active={i === 0}>{t}</Tab>)}
    </TabStrip>
    <Toolbar>
      {TOOLS.map(([n, more]) => <ToolBtn key={n} $more={more}><Icon name={n} size={22} /></ToolBtn>)}
    </Toolbar>
    <Main>
      <SideBar>
        <Grip $left={2} $right={7} />
        <SideGrid>
          {SIDE.map(([n, more]) => <ToolBtn key={n} $more={more}><Icon name={n} size={21} /></ToolBtn>)}
        </SideGrid>
      </SideBar>
      <ViewColumn>
        <Viewport>
          <Drawing />
          <ViewportLabel>Top<LabelArrow /></ViewportLabel>
        </Viewport>
        <ViewTabs>
          <ViewTab $w={74} $pad={6}>Perspective</ViewTab>
          <ViewTab $w={36} $active>Top</ViewTab>
          <ViewTab $w={42}>Front</ViewTab>
          <ViewTab $w={44}>Right</ViewTab>
          <PlusTab $w={24}><PlusIcon /></PlusTab>
        </ViewTabs>
      </ViewColumn>
      <Panel>
        <Grip $left={3} />
        <PanelTabs>
          <PanelTab><Icon name="wheel" size={18} />Pr...</PanelTab>
          <Icon name="layers" size={19} />
        </PanelTabs>
        <PanelButtons>
          <ViewBtn $selected><Camera /></ViewBtn>
          <ViewBtn><WallpaperIcon /></ViewBtn>
        </PanelButtons>
        <PropTable>
          {PROPS.map(([head, rows]) => (
            <React.Fragment key={head}>
              <SectionHead>{head}</SectionHead>
              {rows.map(([t, muted]) => <PropRow key={t} $muted={muted}>{t}</PropRow>)}
            </React.Fragment>
          ))}
        </PropTable>
      </Panel>
    </Main>
    <OsnapBar>
      {SNAPS.map(([t, w, on, off]) => (
        <Snap key={t} $w={w} $off={off}>
          <Box $off={off}>{on ? <Tick /> : null}</Box>{t}
        </Snap>
      ))}
    </OsnapBar>
    <StatusBar>
      {STATUS.map(s => (
        <Cell key={s.t} $w={s.w} $on={s.on} $num={s.num} $left={s.swatch || s.left}>
          {s.swatch ? <Swatch /> : null}{s.t}
        </Cell>
      ))}
    </StatusBar>
  </Window>
);

export default App;
